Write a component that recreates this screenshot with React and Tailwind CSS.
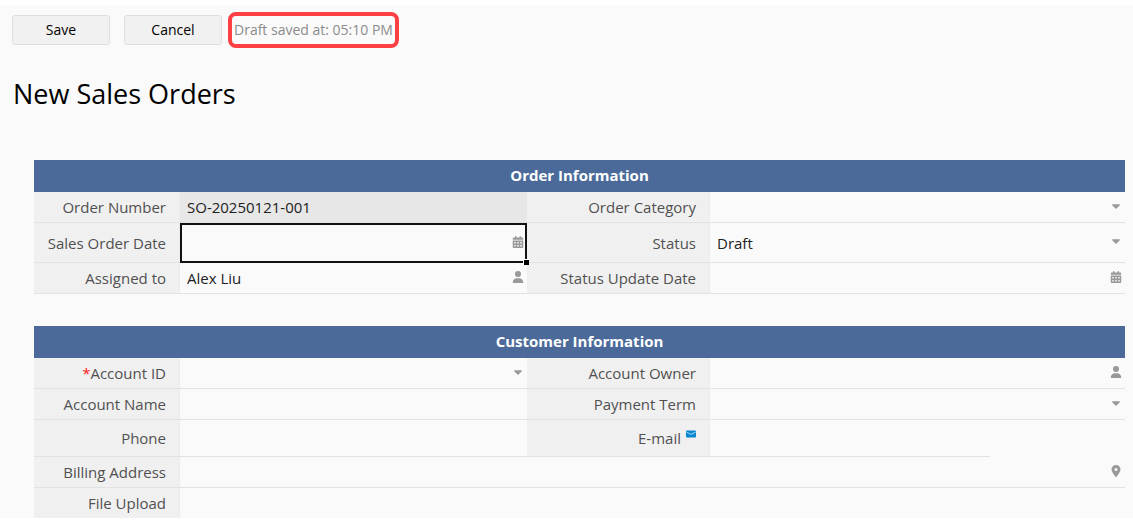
import React from "react";
import { FaUser, FaCalendarDays, FaLocationDot } from "react-icons/fa6";

function Caret() {
  return (
    <svg viewBox="0 0 8 5" className="h-[5px] w-2" fill="currentColor">
      <path d="M.6.3h6.8c.5 0 .7.5.4.9L4.5 4.5a.7.7 0 0 1-1 0L.2 1.2C-.1.8.1.3.6.3z" />
    </svg>
  );
}

function Mail() {
  return (
    <svg viewBox="0 0 10 8" className="h-2 w-[10px] text-[#0788d1]" fill="none">
      <rect y=".5" width="10" height="7" rx=".8" fill="currentColor" />
      <path d="M.4 2 5 4.4 9.6 2" stroke="#cfe9f7" strokeWidth=".8" />
    </svg>
  );
}

const icons = {
  select: <Caret />,
  date: <FaCalendarDays className="h-3 w-3" />,
  user: <FaUser className="h-3 w-3" />,
  place: <FaLocationDot className="h-3 w-3" />,
};

function Field({ id, label, value = "", kind, required, mail, wide, readOnly, active, short, last }) {
  const line = last ? "" : "border-b border-[#e2e2e2]";
  const control = "h-full w-full appearance-none bg-transparent px-[7px] text-[#222] outline-none";
  return (
    <>
      <label
        htmlFor={id}
        className={`flex items-center justify-end gap-[5px] border-r border-r-[#ebebeb] bg-[#f0f0f0] pr-[13px] ${line}`}
      >
        <span>
          {required && <span className="text-[#ff1a1a]">*</span>}
          <span className="text-[#505050]">{label}</span>
        </span>
        {mail && <span className="pb-2"><Mail /></span>}
      </label>
      <div className={`flex ${wide ? "col-span-3" : ""}`}>
        <div
          className={`relative min-w-0 ${short ? "w-[280px]" : "w-full"} ${line} ${readOnly ? "bg-[#e7e7e7]" : ""}`}
        >
          {kind === "select" ? (
            <select id={id} defaultValue={value} className={control}>
              <option value={value}>{value}</option>
            </select>
          ) : (
            <input id={id} type="text" defaultValue={value} readOnly={readOnly} className={control} />
          )}
          {kind && (
            <span className="pointer-events-none absolute inset-y-0 right-0 flex w-[18px] items-center justify-center pb-[2px] text-[#999]">
              {icons[kind]}
            </span>
          )}
          {active && (
            <span className="pointer-events-none absolute -bottom-px left-0 right-0 top-0 border-2 border-[#111]">
              <span className="absolute -bottom-[4px] -right-[4px] h-[6px] w-[6px] border-l border-t border-white bg-black" />
            </span>
          )}
        </div>
      </div>
    </>
  );
}

function Section({ title, rows, children }) {
  return (
    <section aria-label={title}>
      <h2 className="flex h-8 items-center justify-center bg-[#4b6a9a] pb-[2px] text-[15px] font-bold text-white">
        {title}
      </h2>
      <div className={`grid grid-cols-[146px_347fr_183px_415fr] ${rows}`}>{children}</div>
    </section>
  );
}

export default function App() {
  return (
    <main className="mb-1 mt-[5px] bg-[#fafafa] font-['Open_Sans','Noto_Sans',sans-serif] text-[15px] leading-5 text-black">
      <div className="flex items-center px-3 pt-[7px] text-sm">
        <button type="button" className="h-[30px] w-[98px] rounded-[3px] border border-[#dedede] bg-[#f1f1f1]">
          Save
        </button>
        <button type="button" className="ml-[14px] h-[30px] w-[98px] rounded-[3px] border border-[#dedede] bg-[#f1f1f1]">
          Cancel
        </button>
        <p className="ml-[6px] flex h-9 items-center rounded-lg border-4 border-[#fb3f42] px-[2px] text-[#8c8c8c]">
          Draft saved at: 05:10 PM
        </p>
      </div>
      <h1 className="px-[13px] pt-[27px] text-[27px] leading-[38px]">New Sales Orders</h1>
      <form className="flex flex-col gap-8 pl-[34px] pr-2 pt-[47px]">
        <Section title="Order Information" rows="grid-rows-[31px_40px_31px]">
          <Field id="number" label="Order Number" value="SO-20250121-001" readOnly />
          <Field id="category" label="Order Category" kind="select" />
          <Field id="order-date" label="Sales Order Date" kind="date" active />
          <Field id="status" label="Status" value="Draft" kind="select" />
          <Field id="assigned" label="Assigned to" value="Alex Liu" kind="user" />
          <Field id="status-date" label="Status Update Date" kind="date" />
        </Section>
        <Section title="Customer Information" rows="grid-rows-[31px_31px_37px_31px_30px]">
          <Field id="account-id" label="Account ID" kind="select" required />
          <Field id="owner" label="Account Owner" kind="user" />
          <Field id="account-name" label="Account Name" />
          <Field id="term" label="Payment Term" kind="select" />
          <Field id="phone" label="Phone" />
          <Field id="email" label="E-mail" mail short />
          <Field id="address" label="Billing Address" kind="place" wide />
          <Field id="upload" label="File Upload" wide last />
        </Section>
      </form>
    </main>
  );
}
